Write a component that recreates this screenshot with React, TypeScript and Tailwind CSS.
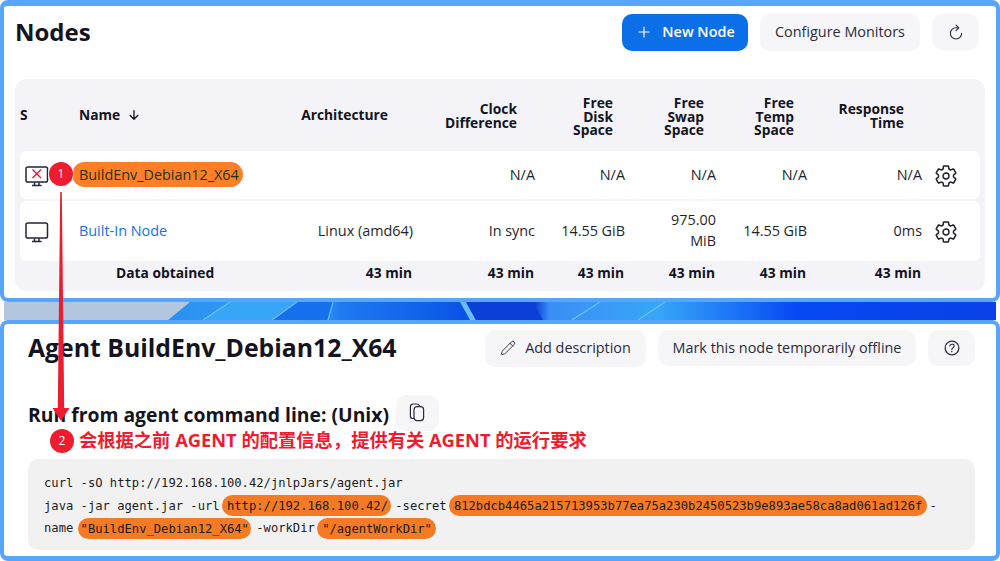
import React from "react";
import {
  IoAddOutline,
  IoArrowDownOutline,
  IoHelpCircleOutline,
  IoRefreshOutline,
  IoSettingsOutline,
} from "react-icons/io5";
import { Pencil } from "lucide-react";

const gridCols =
  "grid grid-cols-[59px_221px_113px_122px_90px_91px_91px_115px_1fr]";

const MonitorIcon = ({ offline }: { offline?: boolean }) => (
  <svg width="24" height="21" viewBox="0 0 24 21" fill="none" stroke="#252535">
    <rect x="1" y="1" width="21.5" height="15" rx="1.8" strokeWidth="1.5" />
    <path d="M9.5 16.5v2.5M14 16.5v2.5" strokeWidth="1.5" />
    <path d="M7 19.5h9.5" strokeWidth="1.5" />
    {offline && <path d="M7.5 3.5l8.5 8.5M16 3.5L7.5 12" stroke="#e6173a" strokeWidth="1.4" />}
  </svg>
);

const CopyIcon = () => (
  <svg width="16" height="19" viewBox="0 0 16 19" fill="none" stroke="#2b2b3b" strokeWidth="1.2">
    <path d="M5 15.5H4a2.6 2.6 0 0 1-2.6-2.6V3.6A2.6 2.6 0 0 1 4 1h4a2.6 2.6 0 0 1 2.5 2" />
    <rect x="5" y="3.6" width="9.6" height="14" rx="3" />
  </svg>
);

const Pill = ({ className, children }: { className: string; children: React.ReactNode }) => (
  <span className={`rounded-full bg-[#f47a24] py-[3.5px] ${className}`}>{children}</span>
);

const Badge = ({ n, className }: { n: number; className: string }) => (
  <span
    className={`absolute flex h-[24px] w-[24px] items-center justify-center rounded-full bg-[#ee1c2e] text-[12px] text-white ${className}`}
  >
    {n}
  </span>
);

const headers = [
  { label: "Architecture", pad: "pr-[25px] -translate-y-px" },
  { label: "Clock\nDifference", pad: "pr-[18px]" },
  { label: "Free\nDisk\nSpace", pad: "pr-[12px] translate-y-px" },
  { label: "Free\nSwap\nSpace", pad: "pr-[12px] translate-y-px" },
  { label: "Free\nTemp\nSpace", pad: "pr-[13px] translate-y-px" },
  { label: "Response\nTime", pad: "pr-[18px]" },
];

const GhostButton = ({ className, children }: { className: string; children: React.ReactNode }) => (
  <button className={`flex items-center justify-center rounded-[10px] bg-[#f6f6f9] text-[#2b2b3b] ${className}`}>
    {children}
  </button>
);

const Row = ({
  height,
  icon,
  name,
  cells,
}: {
  height: string;
  icon: React.ReactNode;
  name: React.ReactNode;
  cells: React.ReactNode[];
}) => (
  <div className={`${gridCols} ${height} items-center rounded-[6px] bg-white text-[14.4px] text-[#1f1f2e]`}>
    <div className="pl-[5px] pt-[2px]">{icon}</div>
    <div>{name}</div>
    {cells.map((c, i) => (
      <div key={i} className="-translate-y-px text-right leading-[21px]">
        {c}
      </div>
    ))}
    <div className="pl-[12px] pt-[1px]">
      <IoSettingsOutline size={24} color="#1c1c2b" />
    </div>
  </div>
);

export default function App() {
  return (
    <div className="relative flex h-[561px] w-[1000px] flex-col overflow-hidden bg-white font-['Open_Sans','Noto_Sans_CJK_SC',sans-serif] text-[#14141f]">
      {/* nodes window */}
      <section className="h-[302px] shrink-0 rounded-[8px] border-x-[4px] border-b-[4px] border-t-[6px] border-[#58a6fc] bg-white px-[11px] pt-[8px]">
        <div className="flex h-[37px] items-center">
          <h1 className="-translate-y-px text-[24px] font-bold">Nodes</h1>
          <div className="ml-auto mr-[6px] flex gap-[12px]">
            <button className="flex h-[37px] w-[126px] items-center justify-center gap-[9px] rounded-[10px] bg-[#0b6fe8] pb-[2px] text-[14.4px] font-semibold text-white">
              <IoAddOutline size={18} />
              New Node
            </button>
            <GhostButton className="h-[37px] w-[160px] pb-[2px] text-[14.4px]">Configure Monitors</GhostButton>
            <GhostButton className="h-[36px] w-[47px]">
              <IoRefreshOutline size={18} />
            </GhostButton>
          </div>
        </div>

        <div className="mt-[28px] rounded-[12px] bg-[#f3f3f8] px-[5px]">
          <div className={`${gridCols} h-[72px] items-center pt-[1px] text-[13.8px] font-bold leading-[13.5px]`}>
            <div className="-translate-y-px">S</div>
            <div className="flex -translate-y-px items-center gap-[7px]">
              Name <IoArrowDownOutline size={14} />
            </div>
            {headers.map((h) => (
              <div key={h.label} className={`whitespace-pre-line text-right ${h.pad}`}>
                {h.label}
              </div>
            ))}
          </div>

          <div className="flex flex-col gap-[2px]">
            <Row
              height="h-[48px]"
              icon={<MonitorIcon offline />}
              name={
                <span className="-ml-[7px] rounded-full bg-[#ff7f27] py-[3px] pl-[7px] pr-[4px] text-[#1d3314]">
                  BuildEnv_Debian12_X64
                </span>
              }
              cells={["", "N/A", "N/A", "N/A", "N/A", "N/A"]}
            />
            <Row
              height="h-[60px]"
              icon={<MonitorIcon />}
              name={<span className="text-[#1473e6]">Built-In Node</span>}
              cells={[
                "Linux (amd64)",
                "In sync",
                "14.55 GiB",
                <>
                  975.00
                  <br />
                  MiB
                </>,
                "14.55 GiB",
                "0ms",
              ]}
            />
          </div>

          <div className={`${gridCols} h-[30px] items-center pb-[5px] text-[13.8px] font-bold`}>
            <div className="col-span-2 pl-[96px]">Data obtained</div>
            {["43 min", "43 min", "43 min", "43 min", "43 min", "43 min"].map((t, i) => (
              <div key={i} className="pr-[1px] text-right">
                {t}
              </div>
            ))}
          </div>
        </div>
      </section>

      {/* desktop wallpaper between the two windows */}
      <svg className="mx-[4px] h-[18px] w-[992px] shrink-0" viewBox="0 0 992 18" preserveAspectRatio="none">
        <defs>
          <linearGradient id="wall" x1="0" x2="992" y1="0" y2="0" gradientUnits="userSpaceOnUse">
            <stop offset="0.16" stopColor="#2a8ff0" />
            <stop offset="0.31" stopColor="#36a4f5" />
            <stop offset="0.34" stopColor="#1f7af0" />
            <stop offset="0.46" stopColor="#0a55e8" />
            <stop offset="0.535" stopColor="#0a3fd8" />
            <stop offset="0.55" stopColor="#3a8ff5" />
            <stop offset="0.66" stopColor="#36a6f7" />
            <stop offset="0.8" stopColor="#0648f5" />
            <stop offset="1" stopColor="#0a40e6" />
          </linearGradient>
        </defs>
        <rect width="992" height="18" fill="url(#wall)" />
        <polygon points="0,0 186,0 164,18 0,18" fill="#b3c8de" />
        <polygon points="226,0 293,0 268,18 199,18" fill="#38a6f6" />
        <polygon points="293,0 329,0 324,18 268,18" fill="#1670ee" />
        <path d="M226 0L199 18M293 0L268 18M329 0L324 18M596 0L568 18M661 0L634 18" stroke="#7fd0f5" strokeOpacity="0.75" strokeWidth="1.2" fill="none" />
        <polygon points="456,0 462,0 472,18 466,18" fill="#6cbcf8" />
        <polygon points="462,0 528,0 539,18 472,18" fill="#0a3fd8" />
      </svg>

      {/* agent window */}
      <section className="h-[241px] shrink-0 rounded-[8px] border-x-[4px] border-b-[5px] border-t-[4px] border-[#58a6fc] bg-white pl-[24px] pr-[21px] pt-[6px]">
        <div className="flex items-start">
          <h2 className="-translate-y-px text-[24.8px] font-bold leading-[36px]">Agent BuildEnv_Debian12_X64</h2>
          <div className="ml-auto flex gap-[12px] text-[14.4px]">
            <GhostButton className="h-[37px] w-[161px] gap-[9px] pb-[1px]">
              <Pencil size={16} strokeWidth={1.4} />
              Add description
            </GhostButton>
            <GhostButton className="h-[36px] w-[258px]">Mark this node temporarily offline</GhostButton>
            <GhostButton className="h-[36px] w-[47px]">
              <IoHelpCircleOutline size={20} />
            </GhostButton>
          </div>
        </div>

        <div className="mt-[28px] flex items-start gap-[7px]">
          <h3 className="mt-[6px] text-[19.34px] font-bold leading-[28px]">Run from agent command line: (Unix)</h3>
          <GhostButton className="h-[36px] w-[43px] pb-[2px]">
            <CopyIcon />
          </GhostButton>
        </div>

        <pre className="mt-[28px] h-[91px] rounded-[10px] bg-[#f1f1f2] px-[16px] pt-[13px] font-['DejaVu_Sans_Mono',monospace] text-[12.16px] leading-[22.5px] text-[#1c1c1c]">
          <div>curl -sO http://192.168.100.42/jnlpJars/agent.jar</div>
          <div>
            java -jar agent.jar -url <Pill className="-ml-[5px] -mr-[3px] pl-[5px] pr-[3px]">http://192.168.100.42/</Pill> -secret{" "}
            <Pill className="-mx-[5px] px-[5px]">812bdcb4465a215713953b77ea75a230b2450523b9e893ae58ca8ad061ad126f</Pill> -
          </div>
          <div>
            name <Pill className="-ml-[3px] -mr-[2px] pl-[3px] pr-[2px]">"BuildEnv_Debian12_X64"</Pill> -workDir{" "}
            <Pill className="-ml-[5px] -mr-[4px] pl-[5px] pr-[4px]">"/agentWorkDir"</Pill>
          </div>
        </pre>
      </section>

      {/* annotations drawn over the screenshot */}
      <svg className="pointer-events-none absolute left-[50px] top-[190px]" width="24" height="232" viewBox="0 0 24 232">
        <polygon points="10.2,2 11.8,2 14.2,218 19.5,218 11,231 2.5,218 7.8,218" fill="#ee1c2e" />
      </svg>
      <Badge n={1} className="left-[49px] top-[162px] ring-1 ring-white/70" />
      <Badge n={2} className="left-[50px] top-[429px]" />
      <span className="absolute left-[79px] top-[428px] whitespace-nowrap text-[18.3px] font-bold leading-[24px] text-[#ee1c2e]">
        会根据之前 AGENT 的配置信息，提供有关 AGENT 的运行要求
      </span>
    </div>
  );
}
